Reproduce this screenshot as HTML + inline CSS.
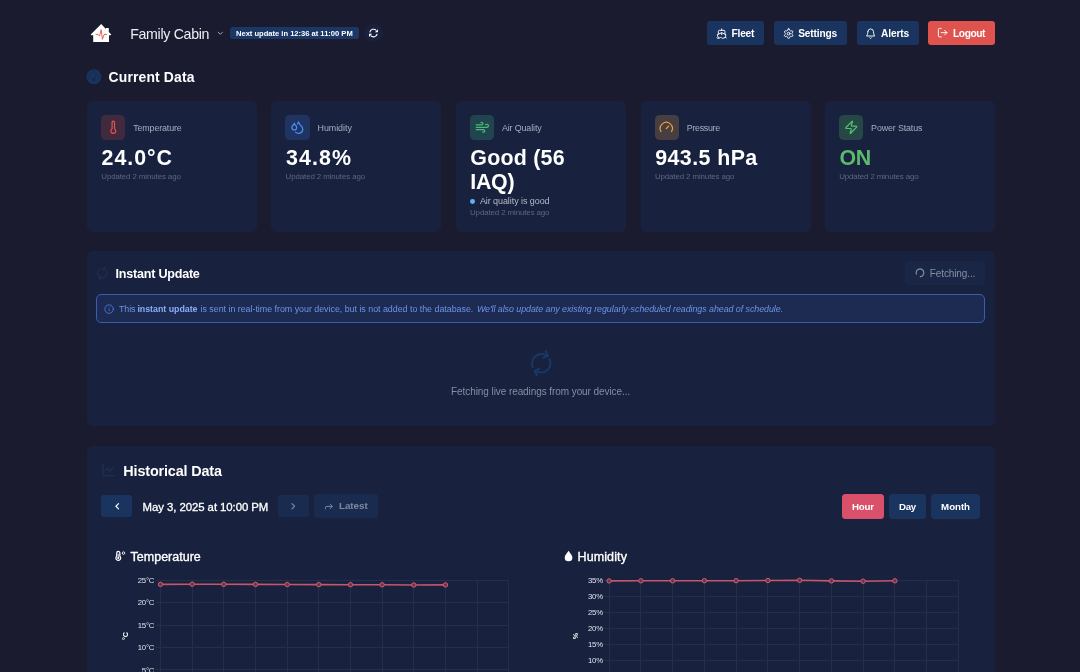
<!DOCTYPE html>
<html lang="en">
<head>
<meta charset="utf-8">
<title>Family Cabin</title>
<style>
*{box-sizing:border-box;margin:0;padding:0}
html,body{width:1080px;height:672px;overflow:hidden;background:#1a1b2e}
body{font-family:"Liberation Sans",sans-serif;color:#fff;position:relative}
.a{position:absolute}
.t{position:absolute;white-space:nowrap;line-height:1}
</style>
</head>
<body>
<div id="root" style="position:absolute;left:0;top:0;width:1080px;height:672px;overflow:hidden;will-change:transform;background:#1a1b2e">
<svg class="a" style="left:84px;top:18px" width="36" height="30" viewBox="84 18 36 30"><path d="M101.2 24.1 L105.9 28.9 V28 H108.8 V31.9 L111.3 34.5 L110.6 35.3 H109 V41.900 H93.200 V35.300 H91.500 L90.700 34.500 Z" fill="#fff"/><path d="M96.1 34.400 H98 L99.500 36.100 L101.200 29.700 L102.400 39.300 L104 34.800 L105 34.300 H106.900" fill="none" stroke="#df514e" stroke-width="0.9" stroke-linejoin="round" stroke-linecap="round"/></svg>
<div class="t" style="left:130.20px;top:27px;font-size:14.2px;color:#eceef5;letter-spacing:-0.316px;">Family Cabin</div>
<svg class="a" style="left:216.05px;top:29.10px;" width="8.6" height="8.6" viewBox="0 0 24 24" fill="none" stroke="#c4c9d8" stroke-width="2.2" stroke-linecap="round" stroke-linejoin="round"><path d="m6 9 6 6 6-6"/></svg>
<div class="a" style="left:230.00px;top:27.00px;width:129.00px;height:12.40px;background:#1a3765;border-radius:2.5px;"></div>
<div class="t" style="left:236.00px;top:30px;font-size:7.6px;font-weight:700;letter-spacing:-0.02px;">Next update in 12:36 at 11:00 PM</div>
<div class="a" style="left:364.10px;top:23.70px;width:18.70px;height:18.70px;background:#19213f;border-radius:50%;"></div>
<svg class="a" style="left:360px;top:20px" width="28" height="26" viewBox="360 20 28 26"><path d="M369.800 32.300 A3.750 3.750 0 0 1 376.300 30.500" fill="none" stroke="#fff" stroke-width="1.050"/><path d="M378 29.200 V32.300 H374.900 Z" fill="#fff"/><path d="M377.200 33.800 A3.750 3.750 0 0 1 370.700 35.600" fill="none" stroke="#fff" stroke-width="1.050"/><path d="M369 36.900 V33.800 H372.100 Z" fill="#fff"/></svg>
<div class="a" style="left:707.00px;top:20.90px;width:57.10px;height:24.20px;background:#1a3460;border-radius:3px;"></div>
<svg class="a" style="left:715.90px;top:27.70px;" width="11.3" height="11.3" viewBox="0 0 24 24" fill="none" stroke="#fff" stroke-width="2" stroke-linecap="round" stroke-linejoin="round"><path d="M12 10.189V14"/><path d="M12 2v3"/><path d="M19 13V7a2 2 0 0 0-2-2H7a2 2 0 0 0-2 2v6"/><path d="M19.380 20A11.600 11.600 0 0 0 21 14l-8.188-3.639a2 2 0 0 0-1.624 0L3 14a11.600 11.600 0 0 0 2.810 7.760"/><path d="M2 21c.6.500 1.200 1 2.500 1 2.500 0 2.500-2 5-2 1.300 0 1.900.5 2.500 1s1.200 1 2.500 1c2.500 0 2.500-2 5-2 1.300 0 1.900.5 2.500 1"/></svg>
<div class="t" style="left:731.60px;top:29px;font-size:10.2px;font-weight:700;letter-spacing:-0.256px;">Fleet</div>
<div class="a" style="left:774.10px;top:20.90px;width:72.90px;height:24.20px;background:#1a3460;border-radius:3px;"></div>
<svg class="a" style="left:782.65px;top:27.50px;" width="11.3" height="11.3" viewBox="0 0 24 24" fill="none" stroke="#fff" stroke-width="2" stroke-linecap="round" stroke-linejoin="round"><path d="M12.220 2h-.44a2 2 0 0 0-2 2v.18a2 2 0 0 1-1 1.730l-.43.250a2 2 0 0 1-2 0l-.15-.08a2 2 0 0 0-2.730.73l-.22.380a2 2 0 0 0 .73 2.730l.15.100a2 2 0 0 1 1 1.720v.51a2 2 0 0 1-1 1.740l-.15.090a2 2 0 0 0-.73 2.730l.22.380a2 2 0 0 0 2.730.73l.15-.08a2 2 0 0 1 2 0l.43.250a2 2 0 0 1 1 1.730V20a2 2 0 0 0 2 2h.44a2 2 0 0 0 2-2v-.18a2 2 0 0 1 1-1.730l.43-.25a2 2 0 0 1 2 0l.15.080a2 2 0 0 0 2.730-.73l.22-.39a2 2 0 0 0-.73-2.730l-.15-.08a2 2 0 0 1-1-1.740v-.5a2 2 0 0 1 1-1.740l.15-.09a2 2 0 0 0 .73-2.730l-.22-.38a2 2 0 0 0-2.730-.73l-.15.080a2 2 0 0 1-2 0l-.43-.25a2 2 0 0 1-1-1.730V4a2 2 0 0 0-2-2z"/><circle cx="12" cy="12" r="3"/></svg>
<div class="t" style="left:798.20px;top:29px;font-size:10.2px;font-weight:700;letter-spacing:-0.175px;">Settings</div>
<div class="a" style="left:856.50px;top:20.90px;width:62.40px;height:24.20px;background:#1a3460;border-radius:3px;"></div>
<svg class="a" style="left:865.45px;top:27.55px;" width="11.3" height="11.3" viewBox="0 0 24 24" fill="none" stroke="#fff" stroke-width="2" stroke-linecap="round" stroke-linejoin="round"><path d="M6 8a6 6 0 0 1 12 0c0 7 3 9 3 9H3s3-2 3-9"/><path d="M10.300 21a1.940 1.940 0 0 0 3.400 0"/></svg>
<div class="t" style="left:881.10px;top:29px;font-size:10.2px;font-weight:700;letter-spacing:-0.165px;">Alerts</div>
<div class="a" style="left:928.20px;top:20.90px;width:66.70px;height:24.20px;background:#df524e;border-radius:3px;"></div>
<svg class="a" style="left:937.15px;top:27.40px;" width="11.3" height="11.3" viewBox="0 0 24 24" fill="none" stroke="#fff" stroke-width="2" stroke-linecap="round" stroke-linejoin="round"><path d="M9 21H5a2 2 0 0 1-2-2V5a2 2 0 0 1 2-2h4"/><polyline points="16 17 21 12 16 7"/><line x1="21" x2="9" y1="12" y2="12"/></svg>
<div class="t" style="left:953.00px;top:29px;font-size:10.2px;font-weight:700;letter-spacing:-0.403px;">Logout</div>
<svg class="a" style="left:82px;top:64px" width="30" height="26" viewBox="82 64 30 26"><circle cx="93.9" cy="76.700" r="7.450" fill="#19335c"/><g fill="#142850"><circle cx="93.600" cy="72.100" r="0.800"/><circle cx="90.500" cy="73.500" r="0.800"/><circle cx="89.200" cy="76.700" r="0.800"/><circle cx="98.500" cy="76.700" r="0.800"/><circle cx="93.700" cy="79.600" r="1.600"/></g><path d="M96.500 73.400 L93.800 79.500" stroke="#142850" stroke-width="1" stroke-linecap="round"/></svg>
<div class="t" style="left:108.60px;top:71px;font-size:13.9px;font-weight:700;letter-spacing:0.155px;">Current Data</div>
<div class="a" style="left:87.00px;top:101.00px;width:170.20px;height:131.00px;background:#18213d;border-radius:5px;"></div>
<div class="a" style="left:101.00px;top:115.20px;width:24.40px;height:24.50px;background:#412a3d;border-radius:4.5px;"></div>
<svg class="a" style="left:105.80px;top:120.10px;" width="14.6" height="14.6" viewBox="0 0 24 24" fill="none" stroke="#e5534b" stroke-width="2" stroke-linecap="round" stroke-linejoin="round"><path d="M14 4v10.540a4 4 0 1 1-4 0V4a2 2 0 0 1 4 0Z"/></svg>
<div class="t" style="left:133.20px;top:124px;font-size:8.9px;color:#a7aec1;letter-spacing:-0.121px;">Temperature</div>
<div class="t" style="left:101.60px;top:148px;font-size:21.4px;font-weight:700;letter-spacing:0.96px;">24.0°C</div>
<div class="t" style="left:101.30px;top:173px;font-size:7.9px;color:#5e6881;letter-spacing:-0.104px;">Updated 2 minutes ago</div>
<div class="a" style="left:271.30px;top:101.00px;width:170.20px;height:131.00px;background:#18213d;border-radius:5px;"></div>
<div class="a" style="left:285.30px;top:115.20px;width:24.40px;height:24.50px;background:#203462;border-radius:4.5px;"></div>
<svg class="a" style="left:290.10px;top:120.10px;" width="14.6" height="14.6" viewBox="0 0 24 24" fill="none" stroke="#4a8df6" stroke-width="2" stroke-linecap="round" stroke-linejoin="round"><path d="M7 16.300c2.200 0 4-1.830 4-4.050 0-1.160-.57-2.260-1.710-3.190S7.290 6.750 7 5.300c-.29 1.450-1.140 2.840-2.290 3.760S3 11.100 3 12.250c0 2.220 1.800 4.050 4 4.050z"/><path d="M12.560 6.600A10.970 10.970 0 0 0 14 3.020c.5 2.500 2 4.900 4 6.500s3 3.500 3 5.500a6.980 6.980 0 0 1-11.910 4.970"/></svg>
<div class="t" style="left:317.50px;top:124px;font-size:8.9px;color:#a7aec1;letter-spacing:-0.029px;">Humidity</div>
<div class="t" style="left:285.90px;top:148px;font-size:21.4px;font-weight:700;letter-spacing:1.149px;">34.8%</div>
<div class="t" style="left:285.60px;top:173px;font-size:7.9px;color:#5e6881;letter-spacing:-0.104px;">Updated 2 minutes ago</div>
<div class="a" style="left:455.70px;top:101.00px;width:170.20px;height:131.00px;background:#18213d;border-radius:5px;"></div>
<div class="a" style="left:469.70px;top:115.20px;width:24.40px;height:24.50px;background:#21454f;border-radius:4.5px;"></div>
<svg class="a" style="left:474.50px;top:120.10px;" width="14.6" height="14.6" viewBox="0 0 24 24" fill="none" stroke="#4cbb72" stroke-width="2" stroke-linecap="round" stroke-linejoin="round"><path d="M12.800 19.600A2 2 0 1 0 14 16H2"/><path d="M17.500 8a2.500 2.500 0 1 1 2 4H2"/><path d="M9.800 4.400A2 2 0 1 1 11 8H2"/></svg>
<div class="t" style="left:501.90px;top:124px;font-size:8.9px;color:#a7aec1;letter-spacing:-0.112px;">Air Quality</div>
<div class="t" style="left:470.30px;top:148px;font-size:21.4px;font-weight:700;letter-spacing:0.237px;">Good (56</div>
<div class="t" style="left:470.30px;top:172px;font-size:21.4px;font-weight:700;letter-spacing:-0.289px;">IAQ)</div>
<div class="a" style="left:470.40px;top:199.20px;width:4.80px;height:4.80px;background:#5cb3ee;border-radius:50%;"></div>
<div class="t" style="left:479.90px;top:197px;font-size:9.0px;color:#b3b9ca;letter-spacing:-0.076px;">Air quality is good</div>
<div class="t" style="left:470.00px;top:209px;font-size:7.9px;color:#5e6881;letter-spacing:-0.104px;">Updated 2 minutes ago</div>
<div class="a" style="left:640.60px;top:101.00px;width:170.20px;height:131.00px;background:#18213d;border-radius:5px;"></div>
<div class="a" style="left:654.60px;top:115.20px;width:24.40px;height:24.50px;background:#463e40;border-radius:4.5px;"></div>
<svg class="a" style="left:659.40px;top:120.10px;" width="14.6" height="14.6" viewBox="0 0 24 24" fill="none" stroke="#eea03a" stroke-width="2" stroke-linecap="round" stroke-linejoin="round"><path d="m12 14 4-4"/><path d="M3.340 19a10 10 0 1 1 17.320 0"/></svg>
<div class="t" style="left:686.80px;top:124px;font-size:8.9px;color:#a7aec1;letter-spacing:-0.314px;">Pressure</div>
<div class="t" style="left:655.20px;top:148px;font-size:21.4px;font-weight:700;letter-spacing:0.422px;">943.5 hPa</div>
<div class="t" style="left:654.90px;top:173px;font-size:7.9px;color:#5e6881;letter-spacing:-0.104px;">Updated 2 minutes ago</div>
<div class="a" style="left:824.90px;top:101.00px;width:170.20px;height:131.00px;background:#18213d;border-radius:5px;"></div>
<div class="a" style="left:838.90px;top:115.20px;width:24.40px;height:24.50px;background:#264746;border-radius:4.5px;"></div>
<svg class="a" style="left:843.70px;top:120.10px;" width="14.6" height="14.6" viewBox="0 0 24 24" fill="none" stroke="#4fc36e" stroke-width="2" stroke-linecap="round" stroke-linejoin="round"><path d="M4 14a1 1 0 0 1-.78-1.630l9.900-10.200a.5.500 0 0 1 .86.460l-1.920 6.020A1 1 0 0 0 13 10h7a1 1 0 0 1 .78 1.630l-9.900 10.200a.5.500 0 0 1-.86-.46l1.920-6.020A1 1 0 0 0 11 14z"/></svg>
<div class="t" style="left:871.10px;top:124px;font-size:8.9px;color:#a7aec1;letter-spacing:-0.133px;">Power Status</div>
<div class="t" style="left:839.50px;top:148px;font-size:21.4px;font-weight:700;color:#5bba6b;letter-spacing:-0.347px;">ON</div>
<div class="t" style="left:839.20px;top:173px;font-size:7.9px;color:#5e6881;letter-spacing:-0.104px;">Updated 2 minutes ago</div>
<div class="a" style="left:87.00px;top:251.00px;width:908.00px;height:175.00px;background:#18213d;border-radius:5px;"></div>
<svg class="a" style="left:96.05px;top:266.95px;transform:rotate(-25deg);" width="12.5" height="12.5" viewBox="0 0 24 24" fill="none" stroke="#1d3157" stroke-width="2" stroke-linecap="round" stroke-linejoin="round"><path d="M3 12a9 9 0 0 1 9-9 9.750 9.750 0 0 1 6.740 2.740L21 8"/><path d="M21 3v5h-5"/><path d="M21 12a9 9 0 0 1-9 9 9.750 9.750 0 0 1-6.740-2.740L3 16"/><path d="M8 16H3v5"/></svg>
<div class="t" style="left:115.60px;top:268px;font-size:12.6px;font-weight:700;letter-spacing:-0.248px;">Instant Update</div>
<div class="a" style="left:905.40px;top:261.10px;width:79.70px;height:23.70px;background:#1a2646;border-radius:4px;"></div>
<svg class="a" style="left:908px;top:262px" width="28" height="22" viewBox="908 262 28 22"><path d="M916.380 274.120 A3.850 3.850 0 1 1 920.340 276.640" fill="none" stroke="#8890a6" stroke-width="1.150" stroke-linecap="round"/></svg>
<div class="t" style="left:929.80px;top:269px;font-size:10.0px;color:#868ea5;letter-spacing:-0.109px;">Fetching...</div>
<div class="a" style="left:96.20px;top:294.30px;width:888.90px;height:28.50px;background:#1d2a52;border-radius:5px;border:1px solid #3b5db0;"></div>
<svg class="a" style="left:103.85px;top:303.70px;" width="10.2" height="10.2" viewBox="0 0 24 24" fill="none" stroke="#5080ea" stroke-width="1.9" stroke-linecap="round" stroke-linejoin="round"><circle cx="12" cy="12" r="10"/><path d="M12 16v-4"/><path d="M12 8h.01"/></svg>
<div class="t" style="left:119.00px;top:305px;font-size:8.9px;color:#6c94e6;letter-spacing:-0.1px;">This</div>
<div class="t" style="left:137.40px;top:305px;font-size:8.9px;font-weight:700;color:#88aef8;letter-spacing:-0.04px;">instant update</div>
<div class="t" style="left:200.50px;top:305px;font-size:8.9px;color:#6c94e6;letter-spacing:-0.021px;">is sent in real-time from your device, but is not added to the database.</div>
<div class="t" style="left:476.90px;top:305px;font-size:8.9px;color:#6c94e6;letter-spacing:-0.054px;font-style:italic;">We'll also update any existing regularly-scheduled readings ahead of schedule.</div>
<svg class="a" style="left:528.95px;top:351.15px;transform:rotate(-25deg);" width="24.5" height="24.5" viewBox="0 0 24 24" fill="none" stroke="#1a3866" stroke-width="1.9" stroke-linecap="round" stroke-linejoin="round"><path d="M3 12a9 9 0 0 1 9-9 9.750 9.750 0 0 1 6.740 2.740L21 8"/><path d="M21 3v5h-5"/><path d="M21 12a9 9 0 0 1-9 9 9.750 9.750 0 0 1-6.740-2.740L3 16"/><path d="M8 16H3v5"/></svg>
<div class="t" style="left:451.10px;top:387px;font-size:10.0px;color:#868ea5;letter-spacing:-0.079px;">Fetching live readings from your device...</div>
<div class="a" style="left:87.00px;top:446.00px;width:908.00px;height:254.00px;background:#18213d;border-radius:5px;"></div>
<svg class="a" style="left:100.65px;top:462.35px;" width="15.5" height="15.5" viewBox="0 0 24 24" fill="none" stroke="#1d3157" stroke-width="2" stroke-linecap="round" stroke-linejoin="round"><path d="M3 3v18h18"/><path d="m19 9-5 5-4-4-3 3"/></svg>
<div class="t" style="left:123.30px;top:464px;font-size:14.4px;font-weight:700;letter-spacing:-0.152px;">Historical Data</div>
<div class="a" style="left:101.00px;top:495.40px;width:31.30px;height:21.50px;background:#1a3460;border-radius:3px;"></div>
<svg class="a" style="left:111.55px;top:501.35px;" width="10.5" height="10.5" viewBox="0 0 24 24" fill="none" stroke="#fff" stroke-width="2.6" stroke-linecap="round" stroke-linejoin="round"><path d="m15 18-6-6 6-6"/></svg>
<div class="t" style="left:142.60px;top:502px;font-size:11.4px;letter-spacing:-0.069px;-webkit-text-stroke:0.3px #fff;">May 3, 2025 at 10:00 PM</div>
<div class="a" style="left:278.10px;top:495.40px;width:31.20px;height:21.50px;background:#1a2b50;border-radius:3px;"></div>
<svg class="a" style="left:288.45px;top:501.35px;" width="10.5" height="10.5" viewBox="0 0 24 24" fill="none" stroke="#7f88a0" stroke-width="2.6" stroke-linecap="round" stroke-linejoin="round"><path d="m9 18 6-6-6-6"/></svg>
<div class="a" style="left:314.10px;top:493.90px;width:63.60px;height:24.40px;background:#1a2b50;border-radius:3px;"></div>
<svg class="a" style="left:316px;top:496px" width="30" height="22" viewBox="316 496 30 22"><path d="M325.300 508.800 V508.100 a1.700 1.700 0 0 1 1.700 -1.700 H332.100 M330.100 504.200 L332.300 506.400 L330.100 508.600" fill="none" stroke="#7d86a0" stroke-width="1" stroke-linecap="round" stroke-linejoin="round"/></svg>
<div class="t" style="left:338.90px;top:501px;font-size:9.9px;font-weight:700;color:#7f88a0;letter-spacing:-0.032px;">Latest</div>
<div class="a" style="left:841.90px;top:493.90px;width:42.20px;height:24.70px;background:#d8506a;border-radius:3.5px;"></div>
<div class="t" style="left:851.90px;top:502px;font-size:9.7px;font-weight:700;letter-spacing:-0.127px;">Hour</div>
<div class="a" style="left:889.00px;top:493.90px;width:37.00px;height:24.70px;background:#1a3460;border-radius:3.5px;"></div>
<div class="t" style="left:898.90px;top:502px;font-size:9.7px;font-weight:700;letter-spacing:-0.26px;">Day</div>
<div class="a" style="left:931.20px;top:493.90px;width:49.20px;height:24.70px;background:#1a3460;border-radius:3.5px;"></div>
<div class="t" style="left:941.10px;top:502px;font-size:9.7px;font-weight:700;letter-spacing:-0.033px;">Month</div>
<svg class="a" style="left:108px;top:544px" width="30" height="26" viewBox="108 544 30 26"><path d="M116.750 552.950 a1.550 1.550 0 0 1 3.100 0 V556.300 a2.350 2.350 0 1 1 -3.100 0 Z" fill="none" stroke="#fff" stroke-width="1.250"/><path d="M118.300 553.800 V558" stroke="#fff" stroke-width="0.800"/><circle cx="118.300" cy="558.100" r="1.050" fill="#fff"/><circle cx="123.500" cy="553.100" r="1.250" fill="none" stroke="#fff" stroke-width="0.900"/></svg>
<div class="t" style="left:130.60px;top:551px;font-size:12.5px;-webkit-text-stroke:0.35px #fff;">Temperature</div>
<svg class="a" style="left:558px;top:544px" width="30" height="26" viewBox="558 544 30 26"><path d="M568.550 550.800 C570 553.300 572.400 555.300 572.400 557.500 A3.850 3.850 0 0 1 564.700 557.500 C564.700 555.300 567.100 553.300 568.550 550.800 Z" fill="#fff"/></svg>
<div class="t" style="left:577.50px;top:551px;font-size:12.5px;letter-spacing:0.109px;-webkit-text-stroke:0.35px #fff;">Humidity</div>
<svg class="a" style="left:0;top:540px" width="1080" height="132" viewBox="0 540 1080 132"><g stroke="#262e4c" stroke-width="1" shape-rendering="crispEdges"><line x1="160.5" y1="580.3" x2="160.5" y2="680"/><line x1="192.2" y1="580.3" x2="192.2" y2="680"/><line x1="223.8" y1="580.3" x2="223.8" y2="680"/><line x1="255.5" y1="580.3" x2="255.5" y2="680"/><line x1="287.2" y1="580.3" x2="287.2" y2="680"/><line x1="318.8" y1="580.3" x2="318.8" y2="680"/><line x1="350.5" y1="580.3" x2="350.5" y2="680"/><line x1="382.1" y1="580.3" x2="382.1" y2="680"/><line x1="413.8" y1="580.3" x2="413.8" y2="680"/><line x1="445.5" y1="580.3" x2="445.5" y2="680"/><line x1="477.1" y1="580.3" x2="477.1" y2="680"/><line x1="508.8" y1="580.3" x2="508.8" y2="680"/><line x1="155.5" y1="580.3" x2="508.8" y2="580.3"/><line x1="155.5" y1="602.5" x2="508.8" y2="602.5"/><line x1="155.5" y1="625.0" x2="508.8" y2="625.0"/><line x1="155.5" y1="647.4" x2="508.8" y2="647.4"/><line x1="155.5" y1="669.7" x2="508.8" y2="669.7"/></g><polyline points="160.5,584.4 192.2,584.2 223.8,584.3 255.5,584.4 287.2,584.5 318.8,584.6 350.5,584.7 382.1,584.8 413.8,585.0 445.5,584.9" fill="none" stroke="#c5566b" stroke-width="1.600"/><circle cx="160.5" cy="584.4" r="2.200" fill="#6b3349" stroke="#d65c70" stroke-width="1"/><circle cx="192.2" cy="584.2" r="2.200" fill="#6b3349" stroke="#d65c70" stroke-width="1"/><circle cx="223.8" cy="584.3" r="2.200" fill="#6b3349" stroke="#d65c70" stroke-width="1"/><circle cx="255.5" cy="584.4" r="2.200" fill="#6b3349" stroke="#d65c70" stroke-width="1"/><circle cx="287.2" cy="584.5" r="2.200" fill="#6b3349" stroke="#d65c70" stroke-width="1"/><circle cx="318.8" cy="584.6" r="2.200" fill="#6b3349" stroke="#d65c70" stroke-width="1"/><circle cx="350.5" cy="584.7" r="2.200" fill="#6b3349" stroke="#d65c70" stroke-width="1"/><circle cx="382.1" cy="584.8" r="2.200" fill="#6b3349" stroke="#d65c70" stroke-width="1"/><circle cx="413.8" cy="585.0" r="2.200" fill="#6b3349" stroke="#d65c70" stroke-width="1"/><circle cx="445.5" cy="584.9" r="2.200" fill="#6b3349" stroke="#d65c70" stroke-width="1"/><text x="154.3" y="583.1" text-anchor="end" font-size="7.800" fill="#dfe2ec" letter-spacing="-0.200">25°C</text><text x="154.3" y="605.3" text-anchor="end" font-size="7.800" fill="#dfe2ec" letter-spacing="-0.200">20°C</text><text x="154.3" y="627.8" text-anchor="end" font-size="7.800" fill="#dfe2ec" letter-spacing="-0.200">15°C</text><text x="154.3" y="650.2" text-anchor="end" font-size="7.800" fill="#dfe2ec" letter-spacing="-0.200">10°C</text><text x="154.3" y="672.5" text-anchor="end" font-size="7.800" fill="#dfe2ec" letter-spacing="-0.200">5°C</text><text transform="translate(127.5,636) rotate(-90)" text-anchor="middle" font-size="7.200" font-weight="700" fill="#fff">°C</text></svg>
<svg class="a" style="left:0;top:540px" width="1080" height="132" viewBox="0 540 1080 132"><g stroke="#262e4c" stroke-width="1" shape-rendering="crispEdges"><line x1="609.1" y1="580.3" x2="609.1" y2="680"/><line x1="640.9" y1="580.3" x2="640.9" y2="680"/><line x1="672.6" y1="580.3" x2="672.6" y2="680"/><line x1="704.4" y1="580.3" x2="704.4" y2="680"/><line x1="736.1" y1="580.3" x2="736.1" y2="680"/><line x1="767.9" y1="580.3" x2="767.9" y2="680"/><line x1="799.6" y1="580.3" x2="799.6" y2="680"/><line x1="831.4" y1="580.3" x2="831.4" y2="680"/><line x1="863.1" y1="580.3" x2="863.1" y2="680"/><line x1="894.9" y1="580.3" x2="894.9" y2="680"/><line x1="926.6" y1="580.3" x2="926.6" y2="680"/><line x1="958.4" y1="580.3" x2="958.4" y2="680"/><line x1="604.1" y1="580.3" x2="958.4" y2="580.3"/><line x1="604.1" y1="596.4" x2="958.4" y2="596.4"/><line x1="604.1" y1="612.3" x2="958.4" y2="612.3"/><line x1="604.1" y1="628.4" x2="958.4" y2="628.4"/><line x1="604.1" y1="644.3" x2="958.4" y2="644.3"/><line x1="604.1" y1="660.6" x2="958.4" y2="660.6"/></g><polyline points="609.1,580.9 640.9,580.8 672.6,580.8 704.4,580.7 736.1,580.7 767.9,580.5 799.6,580.3 831.4,580.9 863.1,581.2 894.9,580.8" fill="none" stroke="#c5566b" stroke-width="1.600"/><circle cx="609.1" cy="580.9" r="2.200" fill="#6b3349" stroke="#d65c70" stroke-width="1"/><circle cx="640.9" cy="580.8" r="2.200" fill="#6b3349" stroke="#d65c70" stroke-width="1"/><circle cx="672.6" cy="580.8" r="2.200" fill="#6b3349" stroke="#d65c70" stroke-width="1"/><circle cx="704.4" cy="580.7" r="2.200" fill="#6b3349" stroke="#d65c70" stroke-width="1"/><circle cx="736.1" cy="580.7" r="2.200" fill="#6b3349" stroke="#d65c70" stroke-width="1"/><circle cx="767.9" cy="580.5" r="2.200" fill="#6b3349" stroke="#d65c70" stroke-width="1"/><circle cx="799.6" cy="580.3" r="2.200" fill="#6b3349" stroke="#d65c70" stroke-width="1"/><circle cx="831.4" cy="580.9" r="2.200" fill="#6b3349" stroke="#d65c70" stroke-width="1"/><circle cx="863.1" cy="581.2" r="2.200" fill="#6b3349" stroke="#d65c70" stroke-width="1"/><circle cx="894.9" cy="580.8" r="2.200" fill="#6b3349" stroke="#d65c70" stroke-width="1"/><text x="602.9" y="583.1" text-anchor="end" font-size="7.800" fill="#dfe2ec" letter-spacing="-0.200">35%</text><text x="602.9" y="599.2" text-anchor="end" font-size="7.800" fill="#dfe2ec" letter-spacing="-0.200">30%</text><text x="602.9" y="615.1" text-anchor="end" font-size="7.800" fill="#dfe2ec" letter-spacing="-0.200">25%</text><text x="602.9" y="631.2" text-anchor="end" font-size="7.800" fill="#dfe2ec" letter-spacing="-0.200">20%</text><text x="602.9" y="647.1" text-anchor="end" font-size="7.800" fill="#dfe2ec" letter-spacing="-0.200">15%</text><text x="602.9" y="663.4" text-anchor="end" font-size="7.800" fill="#dfe2ec" letter-spacing="-0.200">10%</text><text transform="translate(577.5,636) rotate(-90)" text-anchor="middle" font-size="7.200" font-weight="700" fill="#fff">%</text></svg>
</div>
</body>
</html>
